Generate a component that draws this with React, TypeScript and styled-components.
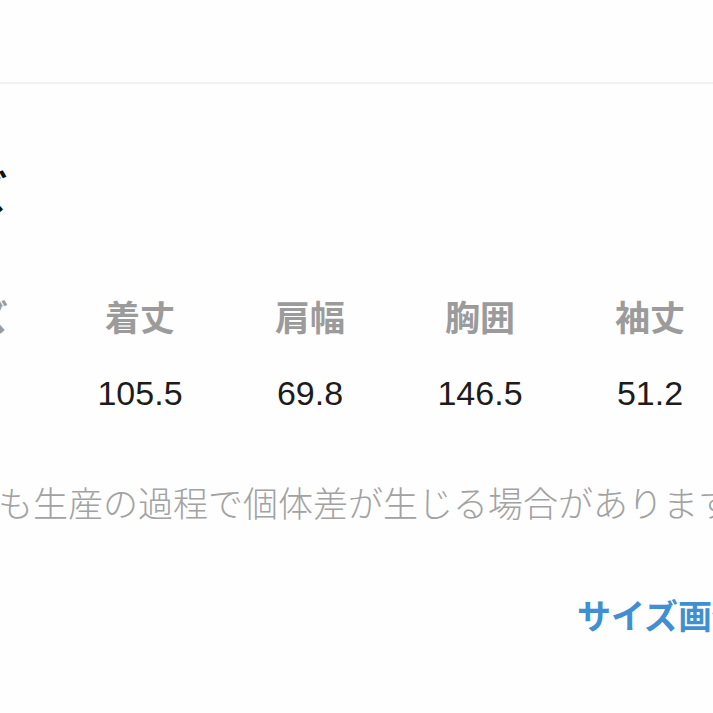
import React from 'react'
import styled, { createGlobalStyle } from 'styled-components'

const GlobalStyle = createGlobalStyle`
  html, body {
    margin: 0;
    padding: 0;
    background: #fefefe;
    overflow: hidden;
  }
  body {
    font-family: "Noto Sans CJK JP", "Noto Sans", sans-serif;
  }
`

const Screen = styled.div`
  width: 713px;
  height: 713px;
  overflow: hidden;
  background: #fefefe;
`

const TopBar = styled.div`
  height: 82px;
  border-bottom: 2px solid #f1f1f1;
`

// the sheet is wider than the screen and starts left of it, so its left edge is cut off
const Sheet = styled.div`
  margin-left: -135px;
  width: 1000px;
  display: flex;
  flex-direction: column;
`

const Title = styled.h2`
  margin: 84px 0 0 6px;
  font-size: 46px;
  line-height: 44px;
  font-weight: 700;
  color: #111;
`

const SizeTable = styled.div`
  margin-top: 84px;
  display: grid;
  grid-template-columns: 190px repeat(4, 170px);
  row-gap: 37px;
`

const Cell = styled.div<{ $head?: boolean }>`
  text-align: center;
  line-height: 40px;
  font-size: ${({ $head }) => ($head ? '35px' : '34px')};
  font-weight: ${({ $head }) => ($head ? 700 : 400)};
  color: ${({ $head }) => ($head ? '#9b9b9b' : '#1c1c1c')};
  font-family: ${({ $head }) =>
    $head ? '"Noto Sans CJK JP", sans-serif' : '"Liberation Sans", Arial, sans-serif'};
  white-space: nowrap;

  &:nth-child(5n + 1) {
    padding-right: 8px;
  }
`

const Note = styled.p`
  margin: 66px 0 0 -7px;
  font-size: 35px;
  line-height: 46px;
  font-weight: 300;
  color: #a2a2a2;
  white-space: nowrap;
`

const LinkRow = styled.div`
  margin-top: 70px;
  padding-left: 712px;
  line-height: 40px;
`

const SizeLink = styled.a`
  font-size: 34px;
  font-weight: 700;
  color: #3f8fd2;
  text-decoration: none;
  white-space: nowrap;
`

const heads = ['サイズ', '着丈', '肩幅', '胸囲', '袖丈']
const values = ['F', '105.5', '69.8', '146.5', '51.2']

export default function App() {
  return (
    <Screen>
      <GlobalStyle />
      <TopBar />
      <Sheet>
        <Title>サイズ</Title>
        <SizeTable>
          {heads.map(h => (
            <Cell key={h} $head>{h}</Cell>
          ))}
          {values.map((v, i) => (
            <Cell key={i}>{i === 0 ? '' : v}</Cell>
          ))}
        </SizeTable>
        <Note>どの商品も生産の過程で個体差が生じる場合があります。</Note>
        <LinkRow>
          <SizeLink href="#">サイズ画像を見る</SizeLink>
        </LinkRow>
      </Sheet>
    </Screen>
  )
}
